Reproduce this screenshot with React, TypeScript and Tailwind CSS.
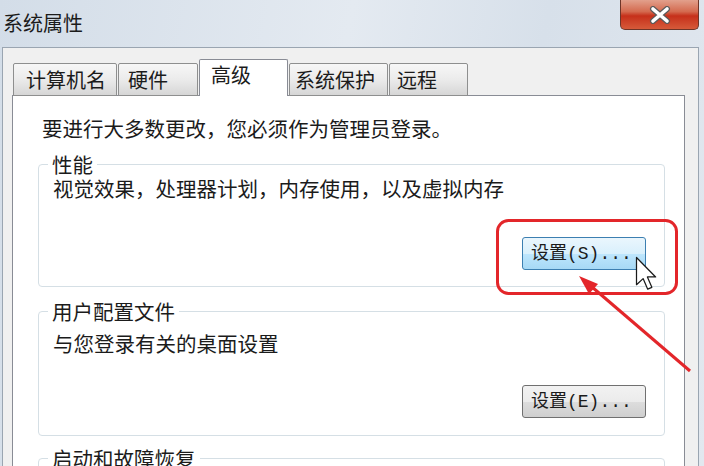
const cjk = "font-['Noto_Sans_CJK_SC','Microsoft_YaHei',sans-serif]";

const tabs = [
  { label: '计算机名', w: 'w-[104px]', pl: 'pl-[12px]', ml: '' },
  { label: '硬件', w: 'w-[80px]', pl: 'pl-[9px]', ml: 'ml-px' },
  { label: '高级', w: 'w-[89px]', pl: 'pl-[11px]', ml: 'ml-px', active: true },
  { label: '系统保护', w: 'w-[99px]', pl: 'pl-[5px]', ml: 'ml-px' },
  { label: '远程', w: 'w-[79px]', pl: 'pl-[7px]', ml: 'ml-px' },
];

function Tab({ label, w, pl, ml, active }: { label: string; w: string; pl: string; ml: string; active?: boolean }) {
  if (active) {
    return (
      <div className={`${w} ${pl} ${ml} h-[37px] pt-[3px] bg-white border border-b-0 border-[#898c95] rounded-t-[2px] leading-[24px]`}>
        {label}
      </div>
    );
  }
  return (
    <div
      className={`${w} ${pl} ${ml} h-[33px] flex items-center border border-[#8e8f8f] rounded-t-[2px] bg-[linear-gradient(to_bottom,#f7f7f7,#ebebeb_50%,#d6d6d6)] leading-[24px]`}
    >
      {label}
    </div>
  );
}

function SetButton({ label, hot }: { label: string; hot?: boolean }) {
  return (
    <button
      className={`w-[124px] h-[33px] pl-[8px] text-left rounded-[3px] border text-[18px] leading-[22px] text-[#1b1b1b] font-['Liberation_Mono','Noto_Sans_CJK_SC',monospace] ${
        hot
          ? 'border-[#3c7fb1] bg-[linear-gradient(to_bottom,#eaf6fd,#d9f0fc_50%,#bee6fd_51%,#a7d9f5)]'
          : 'border-[#707070] bg-[linear-gradient(to_bottom,#f2f2f2,#ebebeb_50%,#dddddd_51%,#cfcfcf)]'
      }`}
    >
      {label}
    </button>
  );
}

export default function App() {
  return (
    <div className={`relative w-[704px] h-[466px] overflow-hidden text-[#1b1b1b] ${cjk} bg-[linear-gradient(100deg,#d3dde8,#e4eaf1_45%,#d7e0ea_70%,#e2e8ef)]`}>
      {/* title bar */}
      <div className="h-[47px] flex items-start justify-between">
        <div className="pl-[3px] pt-[11px] text-[20px] leading-[24px]">系统属性</div>
        <div className="mr-[5px] w-[79px] h-[30px] rounded-b-[5px] border border-t-0 border-[#6e3528] bg-[linear-gradient(to_bottom,#e2a08c,#d46a4f_40%,#c6301a_55%,#d65a3a)] flex items-center justify-center">
          <svg width="24" height="18" viewBox="0 0 24 18" className="mt-[1px]">
            <path d="M5 3 L19 15 M19 3 L5 15" stroke="#5a5a5a" strokeWidth="6" strokeLinecap="round" />
            <path d="M5 3 L19 15 M19 3 L5 15" stroke="#ffffff" strokeWidth="3.6" strokeLinecap="round" />
          </svg>
        </div>
      </div>

      {/* client area */}
      <div className="ml-[2px] w-[697px] h-[430px] border border-b-0 border-[#9aa5b1] bg-[#f0f0f0] flex flex-col">
        <div className="relative z-10 -mb-px ml-[10px] mt-[11px] flex items-end text-[20px]">
          {tabs.map((t) => (
            <Tab key={t.label} {...t} />
          ))}
        </div>

        <div className="ml-[9px] w-[673px] flex-1 bg-white border border-b-0 border-[#898c95] flex flex-col text-[20.5px] leading-[24px]">
          <div className="pt-[20px] pl-[29px]">要进行大多数更改，您必须作为管理员登录。</div>

          <fieldset className="mt-[14px] ml-[25px] w-[627px] border border-[#d5dfe5] rounded-[4px] px-0 pb-[16px] flex flex-col">
            <legend className="ml-[9px] px-[4px] leading-[20px]">性能</legend>
            <div className="mt-[2px] pl-[14px]">视觉效果，处理器计划，内存使用，以及虚拟内存</div>
            <div className="mt-[37px] pr-[18px] flex justify-end">
              <SetButton label="设置(S)..." hot />
            </div>
          </fieldset>

          <fieldset className="mt-[14px] ml-[25px] w-[627px] border border-[#d5dfe5] rounded-[4px] px-0 pb-[17px] flex flex-col">
            <legend className="ml-[9px] px-[4px] leading-[20px]">用户配置文件</legend>
            <div className="mt-[10px] pl-[14px]">与您登录有关的桌面设置</div>
            <div className="mt-[30px] pr-[18px] flex justify-end">
              <SetButton label="设置(E)..." />
            </div>
          </fieldset>

          <fieldset className="mt-[12px] ml-[25px] w-[627px] h-[80px] border border-[#d5dfe5] rounded-[4px] px-0">
            <legend className="ml-[9px] px-[4px] leading-[20px]">启动和故障恢复</legend>
          </fieldset>
        </div>
      </div>

      {/* annotations */}
      <svg className="absolute inset-0 pointer-events-none" width="704" height="466" viewBox="0 0 704 466">
        <rect x="497.5" y="220.5" width="179" height="73" rx="11" fill="none" stroke="#e3262a" strokeWidth="3" />
        <line x1="592" y1="287" x2="690" y2="371" stroke="#e3262a" strokeWidth="3" />
        <polygon points="579,276 598,284 589,294" fill="#e3262a" />
        <g transform="translate(636.5 257.5) scale(1.65)">
          <path d="M0 0 V16.5 L4 12.8 L6.8 19.2 L9.3 18.1 L6.6 11.8 H11.6 Z" fill="#ffffff" stroke="#1a1a1a" strokeWidth="0.75" strokeLinejoin="round" />
        </g>
      </svg>
    </div>
  );
}
